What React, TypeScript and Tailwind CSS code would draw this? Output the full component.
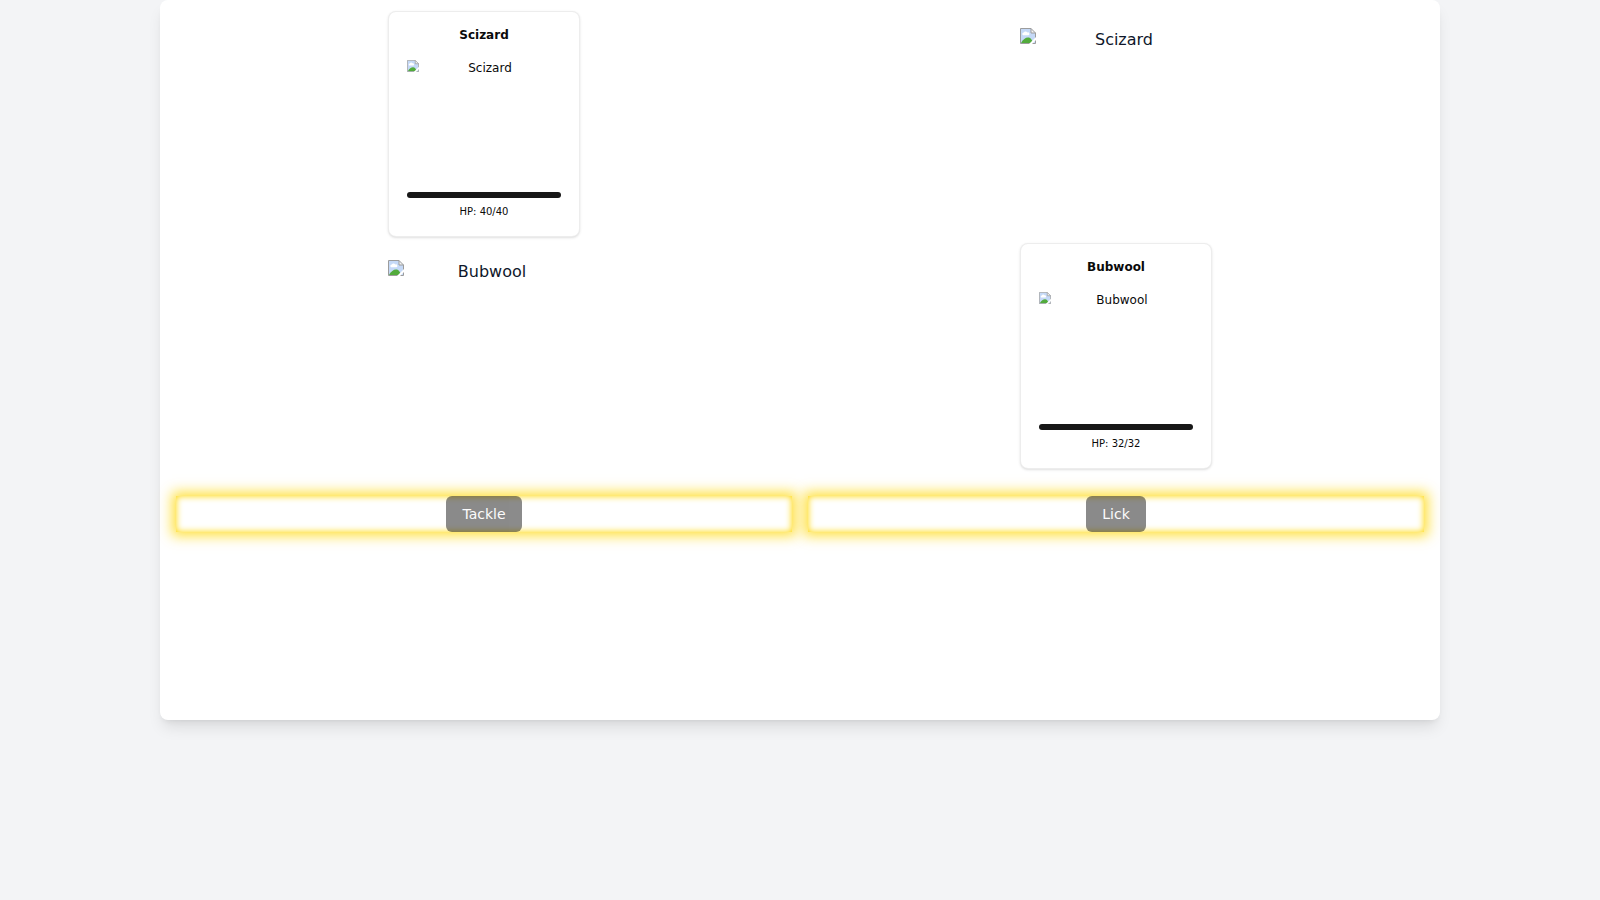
type Creature = { name: string; hp: number; maxHp: number };

const opponent: Creature = { name: "Scizard", hp: 40, maxHp: 40 };
const player: Creature = { name: "Bubwool", hp: 32, maxHp: 32 };

function MissingImageIcon({ className }: { className: string }) {
  return (
    <svg viewBox="0 0 16 16" className={className} aria-hidden="true">
      <path d="M0.5 0.5H11L15.5 5V15.5H0.5Z" fill="#c5d9f7" />
      <path d="M3 7.2a1.4 1.4 0 0 1 .8-2.6a2 2 0 0 1 3.5-.2a1.5 1.5 0 0 1 1.2 2.8Z" fill="#fff" />
      <path d="M1 15C3 11.5 5.5 9.6 8 9.6S11.5 11 13 15Z" fill="#52ab3c" />
      <path d="M11 0.5V5H15.5Z" fill="#f4f4f4" />
      <path d="M11 0.5V5H15.5M0.5 15.5V0.5H11L15.5 5V15.5Z" fill="none" stroke="#9c9c9c" />
      <path d="M16 9L9 16H12L16 12Z" fill="#fff" />
    </svg>
  );
}

function Sprite({ name }: { name: string }) {
  return (
    <div role="img" aria-label={name} className="flex h-48 w-48 items-start text-base leading-6 text-slate-900">
      <MissingImageIcon className="h-4 w-4 shrink-0" />
      <span className="flex-1 text-center">{name}</span>
    </div>
  );
}

function CreatureCard({ creature }: { creature: Creature }) {
  return (
    <article className="w-48 rounded-lg border border-neutral-200/70 bg-white px-[18px] pt-[15px] pb-4 text-neutral-950 shadow-sm">
      <h2 className="text-center text-xs leading-4 font-bold">{creature.name}</h2>
      <div role="img" aria-label={creature.name} className="mt-[17px] flex h-[120px] items-start text-xs">
        <MissingImageIcon className="h-3 w-3 shrink-0" />
        <span className="flex-1 text-center">{creature.name}</span>
      </div>
      <div
        role="progressbar"
        aria-label={`${creature.name} HP`}
        aria-valuenow={creature.hp}
        aria-valuemax={creature.maxHp}
        className="mt-3 h-1.5 overflow-hidden rounded-full bg-neutral-300"
      >
        <div className="h-full bg-neutral-900" style={{ width: `${(creature.hp / creature.maxHp) * 100}%` }} />
      </div>
      <p className="mt-1.5 text-center text-[10px] leading-4">
        HP: {creature.hp}/{creature.maxHp}
      </p>
    </article>
  );
}

function Skill({ name }: { name: string }) {
  return (
    <div className="flex justify-center shadow-[0_0_12px_4px_#ffd700c0,inset_0_0_7px_#ffd700]">
      <button
        type="button"
        disabled
        className="h-9 rounded-md bg-neutral-900 px-4 text-sm text-neutral-50 opacity-50"
      >
        {name}
      </button>
    </div>
  );
}

export default function App() {
  return (
    <div className="min-h-screen bg-gray-100 font-['DejaVu_Sans',sans-serif]">
      <main className="mx-auto min-h-[80vh] w-4/5 rounded-lg bg-white p-4 shadow-lg">
        <section className="grid auto-rows-[216px] grid-cols-2 place-items-center gap-4">
          <CreatureCard creature={opponent} />
          <Sprite name={opponent.name} />
          <Sprite name={player.name} />
          <CreatureCard creature={player} />
        </section>
        <section className="mt-8 grid grid-cols-2 gap-4">
          <Skill name="Tackle" />
          <Skill name="Lick" />
        </section>
      </main>
    </div>
  );
}
